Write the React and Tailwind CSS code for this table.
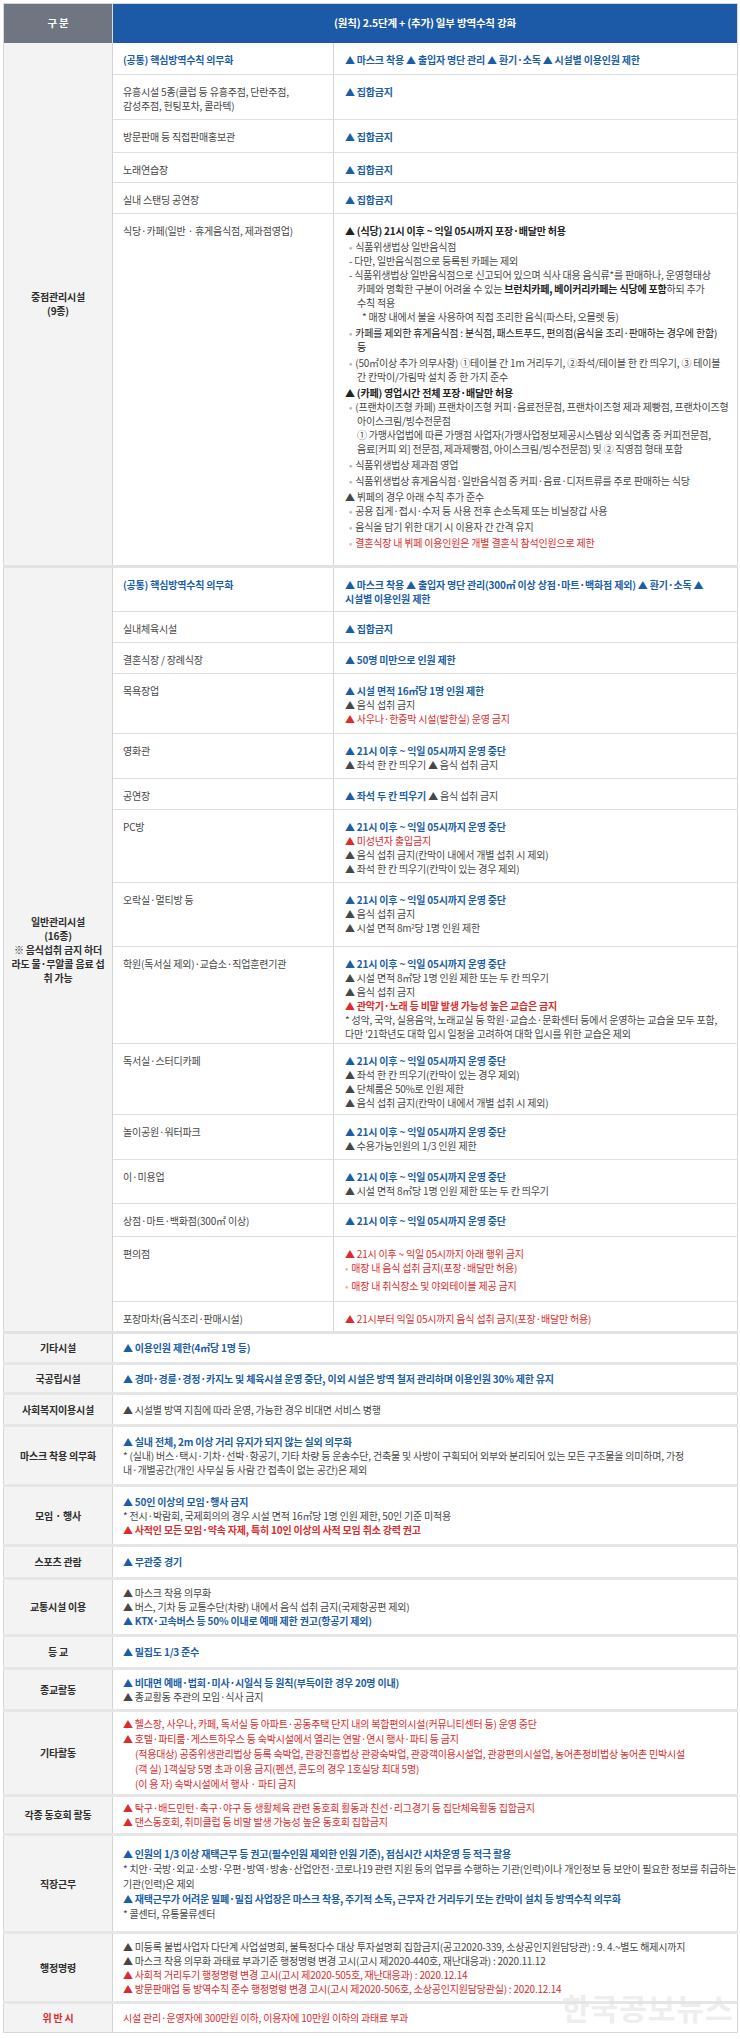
import React from "react";

const C = {
  b: "text-[#1b5ea6] font-bold",
  r: "text-[#dc2b2b]",
  rb: "text-[#dc2b2b] font-bold",
  k: "text-[#222222] font-bold",
  n: "text-[#474747]",
};
const IND = { 0: "", 1: "pl-[4px]", 2: "pl-[12px]", 3: "pl-[17px]" };
const GAP = { 0: "", 1: "mt-[2px]", 2: "mt-[4px]" };

const Dot = () => <span className="opacity-40 mr-[3px]">•</span>;

function Lines({ lines }) {
  return (
    <>
      {lines.map(([c, t, i = 0, g = 0], k) => (
        <div key={k} className={`whitespace-nowrap ${C[c]} ${IND[i]} ${GAP[g]}`}>
          {t}
        </div>
      ))}
    </>
  );
}

const JIP = [["b", "▲ 집합금지"]];
const RUN9 = ["b", "▲ 21시 이후 ~ 익일 05시까지 운영 중단"];

const group1 = [
  {
    h: "h-[32px]",
    label: [<span className={C.b}>(공통) 핵심방역수칙 의무화</span>],
    lines: [["b", "▲ 마스크 착용 ▲ 출입자 명단 관리 ▲ 환기·소독 ▲ 시설별 이용인원 제한"]],
  },
  {
    h: "h-[45px]",
    label: ["유흥시설 5종(클럽 등 유흥주점, 단란주점,", "감성주점, 헌팅포차, 콜라텍)"],
    lines: JIP,
  },
  { h: "h-[33px]", label: ["방문판매 등 직접판매홍보관"], lines: JIP },
  { h: "h-[30px]", label: ["노래연습장"], lines: JIP },
  { h: "h-[31px]", label: ["실내 스탠딩 공연장"], lines: JIP },
  {
    h: "h-[353px]",
    last: true,
    label: ["식당·카페(일반 · 휴게음식점, 제과점영업)"],
    lines: [
      ["k", "▲ (식당) 21시 이후 ~ 익일 05시까지 포장·배달만 허용"],
      ["n", <><Dot />식품위생법상 일반음식점</>, 1, 1],
      ["n", "- 다만, 일반음식점으로 등록된 카페는 제외", 1],
      ["n", "- 식품위생법상 일반음식점으로 신고되어 있으며 식사 대용 음식류*를 판매하나, 운영형태상", 1],
      ["n", <>카페와 명확한 구분이 어려울 수 있는 <b className="text-[#222]">브런치카페, 베이커리카페는 식당에 포함</b>하되 추가</>, 2],
      ["n", "수칙 적용", 2],
      ["n", "* 매장 내에서 불을 사용하여 직접 조리한 음식(파스타, 오믈렛 등)", 3],
      ["n", <><Dot /><span className="text-[#222]">카페를 제외한 휴게음식점 : 분식점, 패스트푸드, 편의점(음식을 조리·판매하는 경우에 한함)</span></>, 1, 1],
      ["n", <span className="text-[#222]">등</span>, 2],
      ["n", <><Dot />(50㎡이상 추가 의무사항) ①테이블 간 1m 거리두기, ②좌석/테이블 한 칸 띄우기, ③ 테이블</>, 1, 1],
      ["n", "간 칸막이/가림막 설치 중 한 가지 준수", 2],
      ["k", "▲ (카페) 영업시간 전체 포장·배달만 허용", 0, 1],
      ["n", <><Dot />(프랜차이즈형 카페) 프랜차이즈형 커피·음료전문점, 프랜차이즈형 제과 제빵점, 프랜차이즈형</>, 1],
      ["n", "아이스크림/빙수전문점", 2],
      ["n", "① 가맹사업법에 따른 가맹점 사업자(가맹사업정보제공시스템상 외식업종 중 커피전문점,", 2],
      ["n", "음료[커피 외] 전문점, 제과제빵점, 아이스크림/빙수전문점) 및 ② 직영점 형태 포함", 2],
      ["n", <><Dot />식품위생법상 제과점 영업</>, 1, 1],
      ["n", <><Dot />식품위생법상 휴게음식점·일반음식점 중 커피·음료·디저트류를 주로 판매하는 식당</>, 1, 1],
      ["n", "▲ 뷔페의 경우 아래 수칙 추가 준수", 0, 1],
      ["n", <><Dot />공용 집게·접시·수저 등 사용 전후 손소독제 또는 비닐장갑 사용</>, 1],
      ["n", <><Dot />음식을 담기 위한 대기 시 이용자 간 간격 유지</>, 1, 1],
      ["r", <><Dot />결혼식장 내 뷔페 이용인원은 개별 결혼식 참석인원으로 제한</>, 1, 1],
    ],
  },
];

const group2 = [
  {
    h: "h-[45px]",
    label: [<span className={C.b}>(공통) 핵심방역수칙 의무화</span>],
    lines: [
      ["b", "▲ 마스크 착용 ▲ 출입자 명단 관리(300㎡ 이상 상점·마트·백화점 제외) ▲ 환기·소독 ▲"],
      ["b", "시설별 이용인원 제한"],
    ],
  },
  { h: "h-[31px]", label: ["실내체육시설"], lines: JIP },
  { h: "h-[31px]", label: ["결혼식장 / 장례식장"], lines: [["b", "▲ 50명 미만으로 인원 제한"]] },
  {
    h: "h-[60px]",
    label: ["목욕장업"],
    lines: [
      ["b", "▲ 시설 면적 16㎡당 1명 인원 제한"],
      ["n", "▲ 음식 섭취 금지"],
      ["r", "▲ 사우나·한증막 시설(발한실) 운영 금지"],
    ],
  },
  {
    h: "h-[45px]",
    label: ["영화관"],
    lines: [RUN9, ["n", "▲ 좌석 한 칸 띄우기 ▲ 음식 섭취 금지"]],
  },
  {
    h: "h-[31px]",
    label: ["공연장"],
    lines: [["n", <><b className="text-[#1b5ea6]">▲ 좌석 두 칸 띄우기</b> ▲ 음식 섭취 금지</>]],
  },
  {
    h: "h-[73px]",
    label: ["PC방"],
    lines: [
      RUN9,
      ["r", "▲ 미성년자 출입금지"],
      ["n", "▲ 음식 섭취 금지(칸막이 내에서 개별 섭취 시 제외)"],
      ["n", "▲ 좌석 한 칸 띄우기(칸막이 있는 경우 제외)"],
    ],
  },
  {
    h: "h-[64px]",
    label: ["오락실·멀티방 등"],
    lines: [RUN9, ["n", "▲ 음식 섭취 금지"], ["n", <>▲ 시설 면적 8m<sup className="text-[6px]">2</sup>당 1명 인원 제한</>]],
  },
  {
    h: "h-[97px]",
    label: ["학원(독서실 제외)·교습소·직업훈련기관"],
    lines: [
      RUN9,
      ["n", "▲ 시설 면적 8㎡당 1명 인원 제한 또는 두 칸 띄우기"],
      ["n", "▲ 음식 섭취 금지"],
      ["rb", "▲ 관악기·노래 등 비말 발생 가능성 높은 교습은 금지"],
      ["n", "* 성악, 국악, 실용음악, 노래교실 등 학원·교습소·문화센터 등에서 운영하는 교습을 모두 포함,"],
      ["n", "다만 '21학년도 대학 입시 일정을 고려하여 대학 입시를 위한 교습은 제외"],
    ],
  },
  {
    h: "h-[71px]",
    label: ["독서실·스터디카페"],
    lines: [
      RUN9,
      ["n", "▲ 좌석 한 칸 띄우기(칸막이 있는 경우 제외)"],
      ["n", "▲ 단체룸은 50%로 인원 제한"],
      ["n", "▲ 음식 섭취 금지(칸막이 내에서 개별 섭취 시 제외)"],
    ],
  },
  { h: "h-[45px]", label: ["놀이공원·워터파크"], lines: [RUN9, ["n", "▲ 수용가능인원의 1/3 인원 제한"]] },
  { h: "h-[44px]", label: ["이·미용업"], lines: [RUN9, ["n", "▲ 시설 면적 8㎡당 1명 인원 제한 또는 두 칸 띄우기"]] },
  { h: "h-[33px]", label: ["상점·마트·백화점(300㎡ 이상)"], lines: [RUN9] },
  {
    h: "h-[65px]",
    label: ["편의점"],
    lines: [
      ["r", "▲ 21시 이후 ~ 익일 05시까지 아래 행위 금지"],
      ["r", <><Dot />매장 내 음식 섭취 금지(포장·배달만 허용)</>],
      ["r", <><Dot />매장 내 취식장소 및 야외테이블 제공 금지</>, 0, 2],
    ],
  },
  {
    h: "h-[31px]",
    last: true,
    label: ["포장마차(음식조리·판매시설)"],
    lines: [["r", "▲ 21시부터 익일 05시까지 음식 섭취 금지(포장·배달만 허용)"]],
  },
];

const lower = [
  { h: "h-[31px]", label: "기타시설", lines: [["b", "▲ 이용인원 제한(4㎡당 1명 등)"]] },
  {
    h: "h-[30px]",
    label: "국공립시설",
    lines: [["b", "▲ 경마·경륜·경정·카지노 및 체육시설 운영 중단, 이외 시설은 방역 철저 관리하며 이용인원 30% 제한 유지"]],
  },
  { h: "h-[32px]", label: "사회복지이용시설", lines: [["n", "▲ 시설별 방역 지침에 따라 운영, 가능한 경우 비대면 서비스 병행"]] },
  {
    h: "h-[60px]",
    label: "마스크 착용 의무화",
    lines: [
      ["b", "▲ 실내 전체, 2m 이상 거리 유지가 되지 않는 실외 의무화"],
      ["n", "* (실내) 버스·택시·기차·선박·항공기, 기타 차량 등 운송수단, 건축물 및 사방이 구획되어 외부와 분리되어 있는 모든 구조물을 의미하며, 가정"],
      ["n", "내·개별공간(개인 사무실 등 사람 간 접촉이 없는 공간)은 제외"],
    ],
  },
  {
    h: "h-[60px]",
    label: "모임 · 행사",
    lines: [
      ["b", "▲ 50인 이상의 모임·행사 금지"],
      ["n", "* 전시·박람회, 국제회의의 경우 시설 면적 16㎡당 1명 인원 제한, 50인 기준 미적용"],
      ["rb", "▲ 사적인 모든 모임·약속 자제, 특히 10인 이상의 사적 모임 취소 강력 권고"],
    ],
  },
  { h: "h-[33px]", label: "스포츠 관람", lines: [["b", "▲ 무관중 경기"]] },
  {
    h: "h-[57px]",
    label: "교통시설 이용",
    lines: [
      ["n", "▲ 마스크 착용 의무화"],
      ["n", "▲ 버스, 기차 등 교통수단(차량) 내에서 음식 섭취 금지(국제항공편 제외)"],
      ["b", "▲ KTX·고속버스 등 50% 이내로 예매 제한 권고(항공기 제외)"],
    ],
  },
  { h: "h-[33px]", label: "등 교", lines: [["b", "▲ 밀집도 1/3 준수"]] },
  {
    h: "h-[42px]",
    label: "종교활동",
    lines: [
      ["b", "▲ 비대면 예배·법회·미사·시일식 등 원칙(부득이한 경우 20명 이내)"],
      ["n", "▲ 종교활동 주관의 모임·식사 금지"],
    ],
  },
  {
    h: "h-[85px]",
    label: "기타활동",
    lead: true,
    lines: [
      ["r", "▲ 헬스장, 사우나, 카페, 독서실 등 아파트·공동주택 단지 내의 복합편의시설(커뮤니티센터 등) 운영 중단"],
      ["r", "▲ 호텔·파티룸·게스트하우스 등 숙박시설에서 열리는 연말·연시 행사·파티 등 금지"],
      ["r", "(적용대상) 공중위생관리법상 등록 숙박업, 관광진흥법상 관광숙박업, 관광객이용시설업, 관광편의시설업, 농어촌정비법상 농어촌 민박시설", 2],
      ["r", "(객 실) 1객실당 5명 초과 이용 금지(펜션, 콘도의 경우 1호실당 최대 5명)", 2],
      ["r", "(이 용 자) 숙박시설에서 행사 · 파티 금지", 2],
    ],
  },
  {
    h: "h-[39px]",
    label: "각종 동호회 활동",
    lines: [
      ["r", "▲ 탁구·배드민턴·축구·야구 등 생활체육 관련 동호회 활동과 친선·리그경기 등 집단체육활동 집합금지"],
      ["r", "▲ 댄스동호회, 취미클럽 등 비말 발생 가능성 높은 동호회 집합금지"],
    ],
  },
  {
    h: "h-[98px]",
    label: "직장근무",
    lead: true,
    lines: [
      ["b", "▲ 인원의 1/3 이상 재택근무 등 권고(필수인원 제외한 인원 기준), 점심시간 시차운영 등 적극 활용"],
      ["n", "* 치안·국방·외교·소방·우편·방역·방송·산업안전·코로나19 관련 지원 등의 업무를 수행하는 기관(인력)이나 개인정보 등 보안이 필요한 정보를 취급하는"],
      ["n", "기관(인력)은 제외"],
      ["b", "▲ 재택근무가 어려운 밀폐·밀집 사업장은 마스크 착용, 주기적 소독, 근무자 간 거리두기 또는 칸막이 설치 등 방역수칙 의무화"],
      ["n", "* 콜센터, 유통물류센터"],
    ],
  },
  {
    h: "h-[70px]",
    label: "행정명령",
    lines: [
      ["n", "▲ 미등록 불법사업자 다단계 사업설명회, 불특정다수 대상 투자설명회 집합금지(공고2020-339, 소상공인지원담당관) : 9. 4.~별도 해제시까지"],
      ["n", "▲ 마스크 착용 의무화 과태료 부과기준 행정명령 변경 고시(고시 제2020-440호, 재난대응과) : 2020.11.12"],
      ["r", "▲ 사회적 거리두기 행정명령 변경 고시(고시 제2020-505호, 재난대응과) : 2020.12.14"],
      ["r", "▲ 방문판매업 등 방역수칙 준수 행정명령 변경 고시(고시 제2020-506호, 소상공인지원담당관실) : 2020.12.14"],
    ],
  },
  {
    h: "h-[30px]",
    label: "위 반 시",
    red: true,
    lines: [["r", "시설 관리·운영자에 300만원 이하, 이용자에 10만원 이하의 과태료 부과"]],
  },
];

function Group({ rows, label }) {
  return rows.map((row, idx) => (
    <tr key={idx} className={row.h}>
      {idx === 0 && (
        <td
          rowSpan={rows.length}
          className="bg-[#f3f3f3] align-middle text-center font-bold text-[#2e2e2e] border-b-[3px] border-b-[#e2e2e2] border-r border-r-[#d4d4d4]"
        >
          {label}
        </td>
      )}
      <td
        className={`align-top pt-[10px] pl-[10px] pr-[2px] text-[#474747] border-r border-r-[#d6d6d6] ${
          row.last ? "border-b-[3px] border-b-[#e2e2e2]" : "border-b border-b-[#dedede]"
        }`}
      >
        {row.label.map((t, k) => (
          <div key={k} className="whitespace-nowrap">
            {t}
          </div>
        ))}
      </td>
      <td
        className={`align-top pt-[10px] pl-[11px] overflow-hidden ${
          row.last ? "border-b-[3px] border-b-[#e2e2e2]" : "border-b border-b-[#dedede]"
        }`}
      >
        <Lines lines={row.lines} />
      </td>
    </tr>
  ));
}

export default function App() {
  return (
    <div className="relative bg-white w-[740px] pt-[3px] pl-[3px] pb-[7px] font-['Noto_Sans_CJK_KR',sans-serif] text-[10px] leading-[14px] tracking-[-0.2px]">
      <table className="table-fixed border-collapse w-[734px] border border-[#d8d8d8]">
        <colgroup>
          <col className="w-[109px]" />
          <col className="w-[221px]" />
          <col className="w-[404px]" />
        </colgroup>
        <thead>
          <tr className="h-[39px]">
            <th className="bg-[#6f7682] text-white font-bold text-[10.5px] border-r border-r-[#dcdcdc]">구 분</th>
            <th colSpan={2} className="bg-[#1c59a7] text-white font-bold text-[10.5px]">
              (원칙) 2.5단계 + (추가) 일부 방역수칙 강화
            </th>
          </tr>
        </thead>
        <tbody>
          <Group
            rows={group1}
            label={
              <>
                <div>중점관리시설</div>
                <div>(9종)</div>
              </>
            }
          />
          <Group
            rows={group2}
            label={
              <>
                <div>일반관리시설</div>
                <div>(16종)</div>
                <div>※ 음식섭취 금지 하더</div>
                <div>라도 물·무알콜 음료 섭</div>
                <div>취 가능</div>
              </>
            }
          />
          {lower.map((row, idx) => (
            <tr key={idx} className={row.h}>
              <td
                className={`bg-[#f3f3f3] align-middle text-center font-bold border-t-[3px] border-t-[#e6e6e6] border-r border-r-[#d4d4d4] ${
                  row.red ? "text-[#dc2b2b]" : "text-[#2e2e2e]"
                }`}
              >
                {row.label}
              </td>
              <td
                colSpan={2}
                className={`align-middle pl-[10px] overflow-hidden border-t-[3px] border-t-[#e6e6e6] ${
                  row.lead ? "leading-[15px]" : ""
                }`}
              >
                <Lines lines={row.lines} />
              </td>
            </tr>
          ))}
        </tbody>
      </table>
      <div className="absolute left-[562px] top-[1990px] text-[30px] leading-[34px] font-bold text-[#e4e4e4] opacity-60 tracking-[1px] pointer-events-none">
        한국공보뉴스
      </div>
    </div>
  );
}
